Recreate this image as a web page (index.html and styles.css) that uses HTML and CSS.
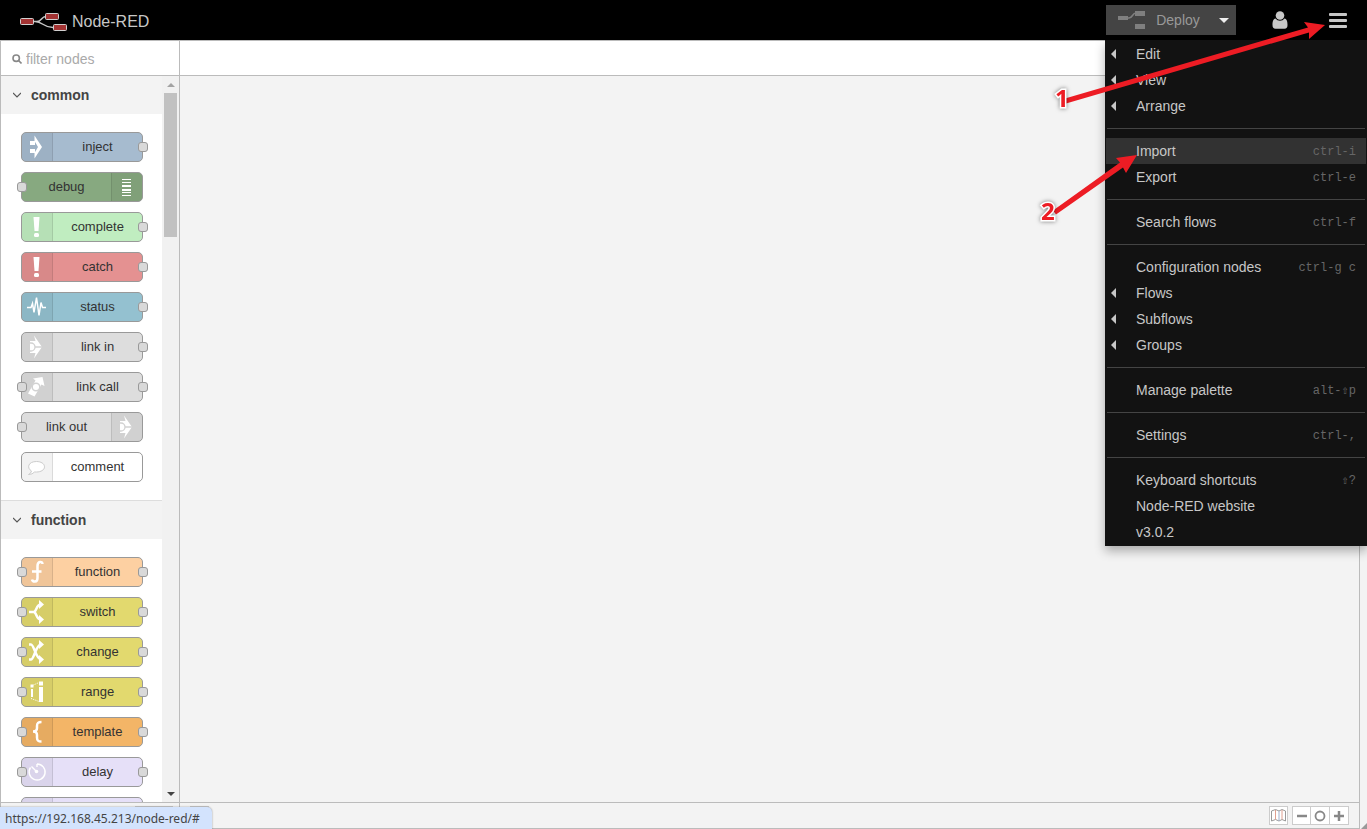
FILE: index.html
```html
<!DOCTYPE html>
<html lang="en">
<head>
    <meta charset="UTF-8">
    <title>Node-RED</title>
    <link rel="stylesheet" href="styles.css">
</head>
<body>
    <header class="header">
        <a class="brand" href="#">
            <svg width="48" height="22" viewBox="0 0 48 22">
                <path d="M13 10.500h4c5 0 4-5 9-5M15 10.500c8 0 8 6 18 6" fill="none" stroke="#c7c7c7" stroke-width="1.500"/>
                <g fill="#a33333" stroke="#d0d0d0">
                    <rect x="0.500" y="7.500" width="13" height="6" rx="1"/>
                    <rect x="25.500" y="2.500" width="13" height="6" rx="1"/>
                    <rect x="33.500" y="13.500" width="13" height="6" rx="1"/>
                </g>
            </svg>
            <span>Node-RED</span>
        </a>
        <div class="toolbar">
            <div class="deploy">
                <button class="deploy-main" disabled>
                    <svg width="28" height="18" viewBox="0 0 28 18">
                        <path d="M9 7h2c4 0 3-5 7-5" fill="none" stroke="#7f7f7f" stroke-width="1.500"/>
                        <path d="M0 5h10v4H0zM17 0h10v5H17zM17 13h10v5H17z" fill="#7f7f7f"/>
                    </svg>
                    <span>Deploy</span>
                </button>
                <button class="deploy-caret" aria-label="Deploy options">
                    <svg width="10" height="5" viewBox="0 0 10 5"><path d="M0 0h10L5 5z" fill="#eee"/></svg>
                </button>
            </div>
            <button class="tool" aria-label="User">
                <svg width="16" height="18" viewBox="0 0 16 18" fill="#c7c7c7">
                    <circle cx="8" cy="4.500" r="4.300"/>
                    <path d="M3.500 7.500C1 8 .5 11 .5 14c0 2.500 1 3.800 3 3.800h9c2 0 3-1.300 3-3.800 0-3-.5-6-3-6.500a5.600 5.600 0 0 1-9 0z"/>
                </svg>
            </button>
            <button class="tool" aria-label="Main menu">
                <svg width="18" height="15" viewBox="0 0 18 15" fill="#c7c7c7">
                    <rect width="18" height="3" rx="1"/>
                    <rect y="6" width="18" height="3" rx="1"/>
                    <rect y="12" width="18" height="3" rx="1"/>
                </svg>
            </button>
        </div>
    </header>

    <main class="main">
        <aside class="palette">
            <label class="search">
                <svg width="10" height="10" viewBox="0 0 10 10" fill="none" stroke="#888" stroke-width="1.600">
                    <circle cx="4.200" cy="4.200" r="3.200"/>
                    <path d="M6.500 6.500L9.500 9.500"/>
                </svg>
                <input type="text" placeholder="filter nodes" aria-label="filter nodes">
            </label>
            <div class="palette-body">
                <div class="categories">
                    <section class="category">
                        <h2>
                            <svg width="8" height="6" viewBox="0 0 8 6"><path d="M0 1l4 4 4-4" fill="none" stroke="#555" stroke-width="1.200"/></svg>
                            common
                        </h2>
                        <div class="nodes">
                            <div class="node inject">
                                <div class="icon"><svg viewBox="0 0 30 28"><path d="M8 8h5v4H8zM8 16h5v4H8zM12.500 2.500L20 14l-7.500 11.500V20l3.500-6-3.500-6z"/></svg></div>
                                <span>inject</span><i class="port out"></i>
                            </div>
                            <div class="node debug right">
                                <div class="icon"><svg viewBox="0 0 30 28"><path d="M10 6h9v1h-9zM10 9h9v1h-9zM10 12h9v2h-9zM10 16h9v2h-9zM10 19h9v1h-9zM10 22h9v1h-9z"/></svg></div>
                                <span>debug</span><i class="port in"></i>
                            </div>
                            <div class="node complete">
                                <div class="icon"><svg viewBox="0 0 30 28"><path d="M11.500 4h6l-1 14h-4z"/><rect x="12" y="20" width="5" height="4" rx="1.500"/></svg></div>
                                <span>complete</span><i class="port out"></i>
                            </div>
                            <div class="node catch">
                                <div class="icon"><svg viewBox="0 0 30 28"><path d="M11.500 4h6l-1 14h-4z"/><rect x="12" y="20" width="5" height="4" rx="1.500"/></svg></div>
                                <span>catch</span><i class="port out"></i>
                            </div>
                            <div class="node status">
                                <div class="icon"><svg viewBox="0 0 30 28"><path d="M5 14.500h4l1.500-4 1.500 9 2.500-15 2.500 18 2-13 1.500 5H24" fill="none" stroke="#fff" stroke-width="1.500"/></svg></div>
                                <span>status</span><i class="port out"></i>
                            </div>
                            <div class="node link">
                                <div class="icon"><svg viewBox="0 0 30 28"><path d="M8 8h5.500L12 2.500 20 14l-8 11.500 1.500-5.500H8z"/><path d="M8 10h1a4 4 0 0 1 0 8H8M13 14h7" fill="none" stroke="#d2d2d2" stroke-width="1.300"/></svg></div>
                                <span>link in</span><i class="port out"></i>
                            </div>
                            <div class="node link">
                                <div class="icon"><svg viewBox="0 0 30 28"><path d="M11 5.500l9.500-1.500 2 9-3-1.500-7 12L6 20.500l7.500-13z"/><circle cx="14" cy="14" r="3.800" stroke="#d2d2d2" stroke-width="1.500"/></svg></div>
                                <span>link call</span><i class="port in"></i><i class="port out"></i>
                            </div>
                            <div class="node link right">
                                <div class="icon"><svg viewBox="0 0 30 28"><path d="M8 8h5.500L12 2.500 20 14l-8 11.500 1.500-5.500H8z"/><path d="M8 10h1a4 4 0 0 1 0 8H8M13 14h7" fill="none" stroke="#d2d2d2" stroke-width="1.300"/></svg></div>
                                <span>link out</span><i class="port in"></i>
                            </div>
                            <div class="node comment">
                                <div class="icon"><svg viewBox="0 0 30 28"><path d="M9.500 18C4.500 15 6 8.500 14.500 8.500c4.500 0 8 2.200 8 5.300s-3.500 5.200-8 5.200h-2q-2 2.500-6 2.500 2.500-1 3-3.500z" stroke="#ccc"/></svg></div>
                                <span>comment</span>
                            </div>
                        </div>
                    </section>
                    <section class="category">
                        <h2>
                            <svg width="8" height="6" viewBox="0 0 8 6"><path d="M0 1l4 4 4-4" fill="none" stroke="#555" stroke-width="1.200"/></svg>
                            function
                        </h2>
                        <div class="nodes">
                            <div class="node function">
                                <div class="icon"><svg viewBox="0 0 30 28"><path class="line" d="M20.500 6C20.500 3 15.500 3 15.500 8v12c0 5-5 4-5.500 1.500M10 13.500h9.500"/></svg></div>
                                <span>function</span><i class="port in"></i><i class="port out"></i>
                            </div>
                            <div class="node switch">
                                <div class="icon"><svg viewBox="0 0 30 28"><path class="line" d="M7 14h5M12 14c3-1 2-7.500 7-7.500M12 14c3 1 2 7.500 7 7.500"/><path d="M17 2l5 4.500-5 4.500zM17 17l5 4.500-5 4.500z"/></svg></div>
                                <span>switch</span><i class="port in"></i><i class="port out"></i>
                            </div>
                            <div class="node change">
                                <div class="icon"><svg viewBox="0 0 30 28"><path class="line" d="M7 6.500h2c3 0 5 15 10 15M7 21.500h2c3 0 5-15 10-15"/><path d="M17 2l5 4.500-5 4.500zM17 17l5 4.500-5 4.500z"/></svg></div>
                                <span>change</span><i class="port in"></i><i class="port out"></i>
                            </div>
                            <div class="node range">
                                <div class="icon"><svg viewBox="0 0 30 28"><path d="M8.500 6.500h3v3h-3zM9 11h2v8H9zM17 3.500h4v4h-4zM17 9h4v15h-4z"/><path d="M11.500 7L17 4.500M9 20.500l8 3" fill="none" stroke="#fff" stroke-dasharray="1 1"/></svg></div>
                                <span>range</span><i class="port in"></i><i class="port out"></i>
                            </div>
                            <div class="node template">
                                <div class="icon"><svg viewBox="0 0 30 28"><path class="line" d="M19.500 4C16 4 15 5 15 8v2c0 2.500-1 3.500-4 3.500 3 0 4 1 4 3.500v2.500c0 3 1 4 4.500 4"/></svg></div>
                                <span>template</span><i class="port in"></i><i class="port out"></i>
                            </div>
                            <div class="node delay">
                                <div class="icon"><svg viewBox="0 0 30 28"><path d="M15 6a8 8 0 1 1-6.500 3.500M15 6v3M14.500 13.500L9.500 8.500" fill="none" stroke="#fff" stroke-width="1.400"/><circle cx="14.500" cy="13.500" r="1.800"/></svg></div>
                                <span>delay</span><i class="port in"></i><i class="port out"></i>
                            </div>
                            <div class="node delay">
                                <div class="icon"></div>
                            </div>
                        </div>
                    </section>
                </div>
                <div class="scrollbar">
                    <svg width="8" height="4" viewBox="0 0 8 4"><path d="M0 4l4-4 4 4z" fill="#a3a3a3"/></svg>
                    <div class="thumb"></div>
                    <svg class="down" width="8" height="4" viewBox="0 0 8 4"><path d="M0 0l4 4 4-4z" fill="#444"/></svg>
                </div>
            </div>
            <div class="footer palette-footer">
                <div class="group">
                    <button aria-label="Collapse all"></button>
                    <button aria-label="Expand all"></button>
                </div>
            </div>
        </aside>

        <section class="workspace">
            <div class="tabs"></div>
            <div class="canvas"></div>
            <div class="footer">
                <div class="group first">
                    <button aria-label="Search flows"></button>
                </div>
                <div class="group">
                    <button aria-label="Toggle navigator">
                        <svg width="15" height="13" viewBox="0 0 15 13" fill="none"><path d="M.5 2l4-1.500 3.500 1.500 3-1.500L14.500 2v10L11 10.500l-3 1.500-3.500-1.500-4 1.500z" stroke="#999"/><path d="M4.500 1v9.500M11 1v9.500" stroke="#e0a090"/><path d="M8 2v10" stroke="#a0b0cc"/></svg>
                    </button>
                </div>
                <div class="group">
                    <button aria-label="Zoom out"><svg width="10" height="10" viewBox="0 0 10 10"><path d="M0 5h10" stroke="#888" stroke-width="2.500"/></svg></button>
                    <button aria-label="Reset zoom"><svg width="12" height="12" viewBox="0 0 12 12"><circle cx="6" cy="6" r="4.500" fill="none" stroke="#888" stroke-width="1.800"/></svg></button>
                    <button aria-label="Zoom in"><svg width="10" height="10" viewBox="0 0 10 10"><path d="M0 5h10M5 0v10" stroke="#888" stroke-width="2.500"/></svg></button>
                </div>
            </div>
        </section>
        <div class="separator">
            <svg width="6" height="6" viewBox="0 0 6 6"><path d="M6 0v6H0z" fill="#999"/></svg>
        </div>
    </main>

    <nav class="menu">
        <ul>
            <li><a class="sub" href="#">Edit</a></li>
            <li><a class="sub" href="#">View</a></li>
            <li><a class="sub" href="#">Arrange</a></li>
        </ul>
        <ul>
            <li><a class="active" href="#">Import <kbd>ctrl-i</kbd></a></li>
            <li><a href="#">Export <kbd>ctrl-e</kbd></a></li>
        </ul>
        <ul>
            <li><a href="#">Search flows <kbd>ctrl-f</kbd></a></li>
        </ul>
        <ul>
            <li><a href="#">Configuration nodes <kbd>ctrl-g c</kbd></a></li>
            <li><a class="sub" href="#">Flows</a></li>
            <li><a class="sub" href="#">Subflows</a></li>
            <li><a class="sub" href="#">Groups</a></li>
        </ul>
        <ul>
            <li><a href="#">Manage palette <kbd>alt-⇧p</kbd></a></li>
        </ul>
        <ul>
            <li><a href="#">Settings <kbd>ctrl-,</kbd></a></li>
        </ul>
        <ul>
            <li><a href="#">Keyboard shortcuts <kbd>⇧?</kbd></a></li>
            <li><a href="#">Node-RED website</a></li>
            <li><a href="#">v3.0.2</a></li>
        </ul>
    </nav>

    <!-- step markers -->
    <svg class="steps" width="340" height="240" viewBox="0 0 340 240">
        <path d="M38 98.500L281 27.500l-4-5.500 21 3-16 14v-6.500L39 103.500z"/>
        <path d="M26 210.500l67-48-4-4.500 21-3-11 18-3-5.500-67 47z"/>
        <text x="28" y="107">1</text>
        <text x="14" y="220">2</text>
    </svg>

    <div class="link-status">https://192.168.45.213/node-red/#</div>
</body>
</html>
```

FILE: styles.css
```css
* {
    box-sizing: border-box;
}

body {
    margin: 0;
    height: 100vh;
    display: flex;
    flex-direction: column;
    overflow: hidden;
    position: relative;
    background: #f3f3f3;
    font-family: "Liberation Sans", Arial, sans-serif;
    font-size: 14px;
    line-height: 20px;
    color: #333;
}

button {
    border: none;
    padding: 0;
    background: none;
    font: inherit;
    display: flex;
    align-items: center;
    justify-content: center;
}

/* header */
.header {
    height: 40px;
    flex: none;
    display: flex;
    justify-content: space-between;
    align-items: center;
    padding-left: 20px;
    background: #000;
}

.brand {
    display: flex;
    align-items: center;
    gap: 4px;
    padding-top: 3px;
    color: #c7c7c7;
    font-size: 16px;
    text-decoration: none;
}

.toolbar {
    display: flex;
    align-items: center;
}

.deploy {
    display: flex;
    width: 130px;
    height: 30px;
    margin-right: 15px;
    background: #444;
}

.deploy-main {
    flex: 1;
    gap: 10px;
    color: #999;
}

.deploy-caret {
    width: 24px;
}

.tool {
    width: 58px;
    height: 40px;
}

/* palette */
.main {
    flex: 1;
    min-height: 0;
    display: flex;
}

.palette {
    width: 180px;
    flex: none;
    display: flex;
    flex-direction: column;
    border: 1px solid #bbb;
    background: #fff;
}

.search {
    display: flex;
    align-items: center;
    gap: 4px;
    height: 35px;
    flex: none;
    padding: 2px 0 0 11px;
    border-bottom: 1px solid #bbb;
}

.search input {
    width: 140px;
    padding: 0;
    border: none;
    outline: none;
    background: none;
    font: inherit;
}

.search input::placeholder {
    color: #aaa;
}

.palette-body {
    flex: 1;
    min-height: 0;
    display: flex;
}

.categories {
    flex: 1;
    overflow: hidden;
}

.category + .category {
    border-top: 1px solid #ddd;
}

.category h2 {
    display: flex;
    align-items: center;
    gap: 10px;
    height: 38px;
    margin: 0;
    padding-left: 12px;
    background: #f3f3f3;
    font-size: 14px;
    color: #444;
}

.nodes {
    display: flex;
    flex-direction: column;
    gap: 10px;
    padding: 18px 19px 18px 20px;
}

.node {
    position: relative;
    display: flex;
    height: 30px;
    border: 1px solid #999;
    border-radius: 5px;
    font-size: 13px;
}

.node.right {
    flex-direction: row-reverse;
}

.node span {
    flex: 1;
    line-height: 27px;
    text-align: center;
}

.icon {
    width: 31px;
    background: rgba(0, 0, 0, 0.05);
    border-right: 1px solid rgba(0, 0, 0, 0.1);
    border-radius: 4px 0 0 4px;
}

.right .icon {
    border-right: none;
    border-left: 1px solid rgba(0, 0, 0, 0.1);
    border-radius: 0 4px 4px 0;
}

.icon svg {
    display: block;
    width: 30px;
    height: 28px;
    fill: #fff;
}

.icon .line {
    fill: none;
    stroke: #fff;
    stroke-width: 2.5;
}

.port {
    position: absolute;
    top: 9px;
    width: 10px;
    height: 10px;
    border: 1px solid #999;
    border-radius: 3px;
    background: #d9d9d9;
}

.port.in {
    left: -5px;
}

.port.out {
    right: -6px;
}

.inject { background: #a6bbcf; }
.debug { background: #87a980; }
.complete { background: #c0edc0; }
.catch { background: #e49191; }
.status { background: #94c1d0; }
.link { background: #ddd; }
.comment { background: #fff; }
.function { background: #fdd0a2; }
.switch, .change, .range { background: #e2d96e; }
.template { background: #f3b567; }
.delay { background: #e6e0f8; }

.scrollbar {
    width: 17px;
    display: flex;
    flex-direction: column;
    align-items: center;
    gap: 6px;
    padding: 7px 0 6px;
    background: #f1f1f1;
}

.thumb {
    width: 13px;
    height: 144px;
    background: #c1c1c1;
}

.scrollbar .down {
    margin-top: auto;
}

/* workspace */
.workspace {
    flex: 1;
    min-width: 0;
    display: flex;
    flex-direction: column;
    border: 1px solid #bbb;
    border-left: none;
}

.tabs {
    height: 35px;
    flex: none;
    background: #fff;
    border-bottom: 1px solid #bbb;
}

.canvas {
    flex: 1;
}

.footer {
    height: 26px;
    flex: none;
    display: flex;
    align-items: center;
    justify-content: flex-end;
    gap: 4px;
    padding-right: 10px;
    border-top: 1px solid #bbb;
    background: #f3f3f3;
}

.palette-footer {
    padding-right: 6px;
}

.group {
    display: flex;
    border: 1px solid #ccc;
    background: #fff;
}

.group.first {
    margin: 0 auto 0 10px;
}

.group button {
    width: 17px;
    height: 17px;
}

.group button + button {
    width: 19px;
    border-left: 1px solid #ccc;
}

.separator {
    width: 7px;
    display: flex;
    align-items: flex-end;
    justify-content: flex-end;
}

/* main menu */
.menu {
    position: absolute;
    top: 40px;
    right: 0;
    width: 262px;
    padding: 1px;
    background: #121212;
    box-shadow: 0 5px 10px rgba(0, 0, 0, 0.3);
}

.menu ul {
    margin: 0;
    padding: 0;
    list-style: none;
}

.menu ul + ul::before {
    content: "";
    display: block;
    height: 1px;
    margin: 9px 1px;
    background: #444;
}

.menu a {
    display: flex;
    align-items: center;
    justify-content: space-between;
    height: 26px;
    padding: 0 10px 0 30px;
    color: #c7c7c7;
    text-decoration: none;
}

.menu a.active {
    background: #323232;
}

.menu a.sub {
    justify-content: flex-start;
    gap: 20px;
    padding-left: 5px;
}

.menu a.sub::before {
    content: "";
    border: 5px solid transparent;
    border-left: none;
    border-right-color: #c7c7c7;
}

.menu kbd {
    padding-top: 2px;
    font-family: "Liberation Mono", "DejaVu Sans Mono", monospace;
    font-size: 12px;
    color: #666;
}

.steps {
    position: absolute;
    top: 0;
    right: 0;
    fill: #ed1c24;
    font-family: "Noto Sans", sans-serif;
    font-size: 24px;
    font-weight: bold;
    pointer-events: none;
}

.steps text {
    stroke: #fff;
    stroke-width: 3px;
    paint-order: stroke;
    filter: drop-shadow(0 0 2px rgba(0, 0, 0, 0.5));
}

.link-status {
    position: absolute;
    left: 0;
    bottom: 0;
    min-width: 212px;
    height: 22px;
    padding: 1px 7px 0 5px;
    border-top-right-radius: 5px;
    background: #d3e3fd;
    box-shadow: 0 0 2px rgba(0, 0, 0, 0.4);
    font-family: "Noto Sans", sans-serif;
    font-size: 12px;
    line-height: 21px;
    color: #444;
}
```
